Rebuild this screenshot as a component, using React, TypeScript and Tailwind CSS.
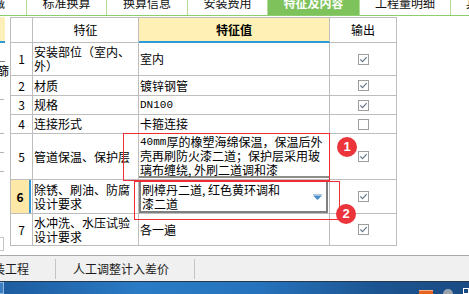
import React from 'react';

const FONT = { fontFamily: '"Noto Sans CJK SC", "Noto Sans", sans-serif' };

type Row = {
  n: string;
  f: string[];
  v?: React.ReactNode;
  c: boolean;
  kind?: 'popup' | 'editor';
};

const Latin = ({ children }: { children: React.ReactNode }) => (
  <span className="text-[11px] leading-none" style={{ fontFamily: '"Liberation Mono", monospace' }}>
    {children}
  </span>
);

const rows: Row[] = [
  { n: '1', f: ['安装部位（室内、', '外）'], v: '室内', c: true },
  { n: '2', f: ['材质'], v: '镀锌钢管', c: true },
  { n: '3', f: ['规格'], v: <Latin>DN100</Latin>, c: true },
  { n: '4', f: ['连接形式'], v: '卡箍连接', c: false },
  { n: '5', f: ['管道保温、保护层'], c: true, kind: 'popup' },
  { n: '6', f: ['除锈、刷油、防腐', '设计要求'], c: true, kind: 'editor' },
  { n: '7', f: ['水冲洗、水压试验', '设计要求'], v: '各一遍', c: true },
];

const Check = ({ on }: { on: boolean }) => (
  <svg width="11" height="11" viewBox="0 0 11 11">
    <rect x="0.5" y="0.5" width="10" height="10" fill="#fff" stroke="#9d9d9d" />
    {on && <path d="M2.3 5.4 L4.5 7.6 L8.7 3.1" fill="none" stroke="#67758b" strokeWidth="1.2" />}
  </svg>
);

const cell = 'border-r border-b border-[#bdbdbd] box-border';

const TopTabs = () => (
  <div className="h-[16px] shrink-0 flex border-b border-[#8dce6c] overflow-hidden text-[12px] leading-[12px] text-[#111]">
    <div className="w-[27px] shrink-0 flex items-end justify-end pr-[21px] pb-[6px] border-r border-[#b3dc9b] overflow-hidden">
      <span className="whitespace-nowrap shrink-0">人材机械</span>
    </div>
    {['标准换算', '换算信息', '安装费用'].map((t, i) => (
      <div
        key={t}
        className={`${i === 1 ? 'w-[81px]' : 'w-[80px]'} shrink-0 flex items-end justify-center pb-[6px] border-r border-[#b3dc9b]`}
      >
        <span className="whitespace-nowrap">{t}</span>
      </div>
    ))}
    <div className="w-[92px] shrink-0 flex items-end justify-center pb-[6px] bg-[#7dc25b] text-white font-bold border-r border-[#b3dc9b]">
      <span className="whitespace-nowrap">特征及内容</span>
    </div>
    <div className="w-[91px] shrink-0 flex items-end justify-center pb-[6px] border-r border-[#b3dc9b]">
      <span className="whitespace-nowrap">工程量明细</span>
    </div>
    <div className="flex-1 flex items-end pl-[15px] pb-[6px] overflow-hidden">
      <span className="whitespace-nowrap">其他</span>
    </div>
  </div>
);

const LeftSliver = () => (
  <div className="w-[10px] shrink-0 flex flex-col">
    <div className="h-[24px] w-[5px] bg-[#fdefb9]" />
    <div className="h-[2px] w-[5px] bg-[#2f9bd7]" />
    <div className="h-[18px]" />
    <div className="h-[1px] w-[5px] bg-[#7c7c7c]" />
    <div className="h-[17px] w-[9px] overflow-hidden flex justify-end items-center text-[12px] leading-[12px]">
      <span className="whitespace-nowrap shrink-0">设篩</span>
    </div>
    <div className="h-[20px]" />
    <div className="h-[1px] w-[4px] bg-[#b4b4b4]" />
    <div className="h-[33px]" />
    <div className="h-[1px] w-[4px] bg-[#b4b4b4]" />
    <div className="h-[18px]" />
    <div className="h-[1px] w-[4px] bg-[#b4b4b4]" />
    <div className="h-[18px]" />
    <div className="h-[1px] w-[4px] bg-[#b4b4b4]" />
    <div className="h-[65px]" />
    <div className="h-[14px] w-[4px] border border-l-0 border-[#c4c4c4]" />
  </div>
);

const Table = () => (
  <div className="grid grid-cols-[22px_106px_191px_67px] grid-rows-[25px_33px_20px_19px_19px_46px_34px_32px] border-l border-t border-[#bdbdbd] self-start text-[12px] text-black">
    {/* header */}
    <div className={`${cell} bg-white`} />
    <div className={`${cell} flex items-center justify-center`}>特征</div>
    <div className="border-r border-[#bdbdbd] border-b-2 border-b-[#2d9ad7] bg-[#fff0b6] flex items-center justify-center font-bold">
      特征值
    </div>
    <div className={`${cell} flex items-center justify-center`}>输出</div>

    {rows.map((r) => (
      <React.Fragment key={r.n}>
        {r.n === '6' ? (
          <div className={`${cell} flex`}>
            <div className="flex-1 bg-[#fde8a7] border-r-2 border-[#3597d4] flex items-center justify-center font-bold">
              6
            </div>
            <div className="w-[1px]" />
          </div>
        ) : (
          <div className={`${cell} flex items-center justify-center`}>{r.n}</div>
        )}

        <div className={`${cell} flex flex-col justify-center pl-[1px] leading-[14px] whitespace-nowrap`}>
          {r.f.map((l) => (
            <div key={l}>{l}</div>
          ))}
        </div>

        {r.kind === 'popup' ? (
          <div className={`${cell}`}>
            <div className="h-[44px] bg-white border-b-2 border-[#8b8b8b] pt-[1px] pl-[1px] whitespace-nowrap">
              <div className="h-[14px] flex items-center">
                <Latin>40mm</Latin>
                <span>厚的橡塑海绵保温，保温后外</span>
              </div>
              <div className="h-[14px] flex items-center">壳再刷防火漆二道；保护层采用玻</div>
              <div className="h-[13px] flex items-center">璃布缠绕, 外刷二道调和漆</div>
            </div>
          </div>
        ) : r.kind === 'editor' ? (
          <div className={`${cell}`}>
            <div className="h-full w-[189px] border-2 border-[#808080] bg-white flex items-center">
              <div className="flex-1 pl-[1px] leading-[14px] whitespace-nowrap">
                <div>刷樟丹二道, 红色黄环调和</div>
                <div>漆二道</div>
              </div>
              <svg width="9" height="6" viewBox="0 0 9 6" className="mr-[4px]">
                <rect x="0" y="0" width="9" height="1" fill="#a9c9e6" />
                <path d="M0 1.5 H9 L4.5 6 Z" fill="#4b8cc4" />
              </svg>
            </div>
          </div>
        ) : (
          <div className={`${cell} flex items-center pl-[1px] whitespace-nowrap`}>{r.v}</div>
        )}

        <div className={`${cell} flex items-center justify-center`}>
          <Check on={r.c} />
        </div>
      </React.Fragment>
    ))}
  </div>
);

const BottomTabs = () => (
  <div className="h-[27px] shrink-0 border-t border-[#a9a9a9] border-b border-b-[#26384c] bg-[#f0f0f0] flex items-center text-[12px] leading-[12px] text-[#1a1a1a]">
    <div className="w-[55px] shrink-0 flex justify-end pr-[26px] overflow-hidden">
      <span className="whitespace-nowrap shrink-0">安装工程</span>
    </div>
    <div className="w-px h-[20px] bg-[#c4c4c4]" />
    <div className="w-[138px] shrink-0 pl-[17px] whitespace-nowrap">人工调整计入差价</div>
    <div className="w-px h-[20px] bg-[#c4c4c4]" />
  </div>
);

const Taskbar = () => (
  <div className="h-[12px] shrink-0 flex items-start bg-[linear-gradient(to_right,#1d5b9f,#2a7bc5_30%,#2673bd_55%,#1c5592_80%,#1a4b84)]">
    <div className="w-[4px] h-[12px] border border-l-0 border-[#8fb6dc] bg-[#3b7fc2]" />
    <div className="flex-1" />
    <div className="w-[14px] h-[4px] mt-[8px] bg-[#e4641f] border-t border-[#f7b28a]" />
    <div className="w-[10px]" />
    <div className="w-[10px] h-[5px] mt-[7px] rounded-t-full bg-[#9aa3ad]" />
    <div className="w-[10px]" />
    <div className="w-[6px] h-[6px] mt-[6px] border border-white" />
  </div>
);

export default function App() {
  return (
    <div className="w-[469px] h-[294px] overflow-hidden bg-white relative flex flex-col" style={FONT}>
      <TopTabs />
      <div className="h-[239px] shrink-0 flex pt-[1px]">
        <LeftSliver />
        <Table />
      </div>
      <BottomTabs />
      <Taskbar />

      {/* annotations */}
      <div className="absolute left-[123px] top-[133px] w-[207px] h-[48px] border border-[#ef2d35]" />
      <div className="absolute left-[134px] top-[181px] w-[206px] h-[39px] border border-[#ef2d35]" />
      <div className="absolute left-[337px] top-[137px] w-[20px] h-[20px] rounded-full bg-[#ec343b] text-white flex items-center justify-center text-[13px] font-semibold" style={{ fontFamily: '"Liberation Sans", sans-serif' }}>
        1
      </div>
      <div className="absolute left-[336px] top-[204px] w-[20px] h-[20px] rounded-full bg-[#ec343b] text-white flex items-center justify-center text-[13px] font-semibold" style={{ fontFamily: '"Liberation Sans", sans-serif' }}>
        2
      </div>
    </div>
  );
}
